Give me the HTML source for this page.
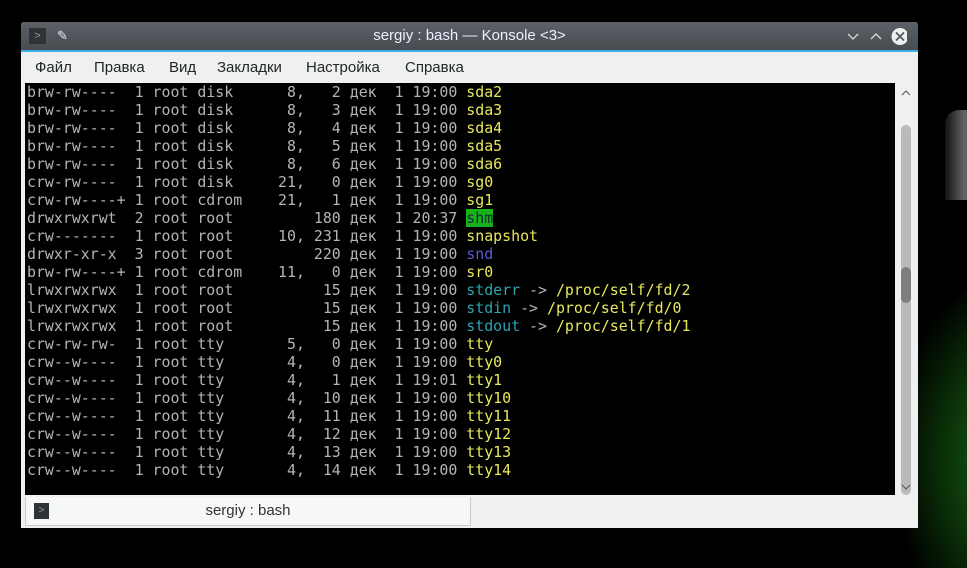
<!DOCTYPE html>
<html><head><meta charset="utf-8"><style>
html,body{margin:0;width:967px;height:568px;overflow:hidden}
body{background:#000;position:relative;font-family:"Liberation Sans","DejaVu Sans",sans-serif}
.glow{position:absolute;left:900px;top:280px;width:140px;height:300px;background:radial-gradient(ellipse at 80% 60%,#1c6a16 0%,#0a2e08 45%,#000 75%)}
.bulb{position:absolute;left:945px;top:110px;width:40px;height:90px;background:linear-gradient(90deg,#111,#666,#222);border-radius:14px 0 0 0}
.win{position:absolute;left:21px;top:22px;width:897px;height:506px;background:#eff0f1;border-radius:3px 3px 0 0}
.title{position:absolute;left:0;top:0;width:897px;height:28px;background:linear-gradient(#5b6166,#474c51);border-bottom:2px solid #3daee9;border-radius:3px 3px 0 0;color:#eef;text-align:center;font-size:15px;line-height:28px}
.menu{position:absolute;top:30px;left:0;height:31px;font-size:15px;line-height:31px;color:#232627}
.menu span{position:absolute;white-space:nowrap}
.term{position:absolute;left:4px;top:61px;width:870px;height:412px;background:#000}
pre{margin:0;padding:0 0 0 2px;font-family:"DejaVu Sans Mono",monospace;font-size:14.9px;line-height:18px;color:#b4b4b4}
.y{color:#e8e85c}.c{color:#2aa5b0}.b{color:#5a5ad6}.g{background:#18b218;color:#102a40}
.sb{position:absolute;left:875px;top:61px;width:18px;height:412px;background:#eff0f1}
.track{position:absolute;left:880px;top:103px;width:10px;height:370px;background:#b9babb;border-radius:5px}
.thumb{position:absolute;left:880px;top:245px;width:10px;height:36px;background:#7c7e80;border-radius:5px}
.tab{position:absolute;left:4px;top:475px;width:444px;height:28px;background:#f6f7f7;border:1px solid #c8c9ca;border-top:none;text-align:center;font-size:15px;line-height:28px;color:#333}
</style></head><body>
<div class="bulb"></div><div class="glow"></div>
<div class="win">
<div class="title"><span style="position:absolute;left:8px;top:6px;width:17px;height:16px;background:#2f3336;color:#999;font-size:11px;line-height:16px">&gt;</span><span style="position:absolute;left:36px;top:0;font-size:13px">✎</span>sergiy : bash — Konsole &lt;3&gt;
<svg style="position:absolute;left:826px;top:6px" width="60" height="18"><path d="M1 6l5 5 5-5" stroke="#ddd" fill="none" stroke-width="1.3"/><path d="M24 11l5-5 5 5" stroke="#ddd" fill="none" stroke-width="1.3"/><circle cx="53" cy="8.5" r="8.5" fill="#eee"/><path d="M49 4.5l8 8M57 4.5l-8 8" stroke="#4d5459" stroke-width="1.6"/></svg></div>
<div class="menu"><span style="left:14px">Файл</span><span style="left:73px">Правка</span><span style="left:148px">Вид</span><span style="left:196px">Закладки</span><span style="left:285px">Настройка</span><span style="left:384px">Справка</span></div>
<div class="term"><pre>brw-rw----  1 root disk      8,   2 дек  1 19:00 <span class="y">sda2</span>
brw-rw----  1 root disk      8,   3 дек  1 19:00 <span class="y">sda3</span>
brw-rw----  1 root disk      8,   4 дек  1 19:00 <span class="y">sda4</span>
brw-rw----  1 root disk      8,   5 дек  1 19:00 <span class="y">sda5</span>
brw-rw----  1 root disk      8,   6 дек  1 19:00 <span class="y">sda6</span>
crw-rw----  1 root disk     21,   0 дек  1 19:00 <span class="y">sg0</span>
crw-rw----+ 1 root cdrom    21,   1 дек  1 19:00 <span class="y">sg1</span>
drwxrwxrwt  2 root root         180 дек  1 20:37 <span class="g">shm</span>
crw-------  1 root root     10, 231 дек  1 19:00 <span class="y">snapshot</span>
drwxr-xr-x  3 root root         220 дек  1 19:00 <span class="b">snd</span>
brw-rw----+ 1 root cdrom    11,   0 дек  1 19:00 <span class="y">sr0</span>
lrwxrwxrwx  1 root root          15 дек  1 19:00 <span class="c">stderr</span> -&gt; <span class="y">/proc/self/fd/2</span>
lrwxrwxrwx  1 root root          15 дек  1 19:00 <span class="c">stdin</span> -&gt; <span class="y">/proc/self/fd/0</span>
lrwxrwxrwx  1 root root          15 дек  1 19:00 <span class="c">stdout</span> -&gt; <span class="y">/proc/self/fd/1</span>
crw-rw-rw-  1 root tty       5,   0 дек  1 19:00 <span class="y">tty</span>
crw--w----  1 root tty       4,   0 дек  1 19:00 <span class="y">tty0</span>
crw--w----  1 root tty       4,   1 дек  1 19:01 <span class="y">tty1</span>
crw--w----  1 root tty       4,  10 дек  1 19:00 <span class="y">tty10</span>
crw--w----  1 root tty       4,  11 дек  1 19:00 <span class="y">tty11</span>
crw--w----  1 root tty       4,  12 дек  1 19:00 <span class="y">tty12</span>
crw--w----  1 root tty       4,  13 дек  1 19:00 <span class="y">tty13</span>
crw--w----  1 root tty       4,  14 дек  1 19:00 <span class="y">tty14</span></pre></div>
<div class="sb"></div>
<svg style="position:absolute;left:879px;top:67px" width="12" height="8"><path d="M2 6l4-4 4 4" stroke="#555" fill="none"/></svg>
<div class="track"></div><div class="thumb"></div>
<svg style="position:absolute;left:879px;top:461px" width="12" height="8"><path d="M2 2l4 4 4-4" stroke="#555" fill="none"/></svg>
<div class="tab"><span style="position:absolute;left:8px;top:6px;width:15px;height:16px;background:#2f3336;color:#999;font-size:10px;line-height:16px">&gt;</span>sergiy : bash</div>
</div>
</body></html>
